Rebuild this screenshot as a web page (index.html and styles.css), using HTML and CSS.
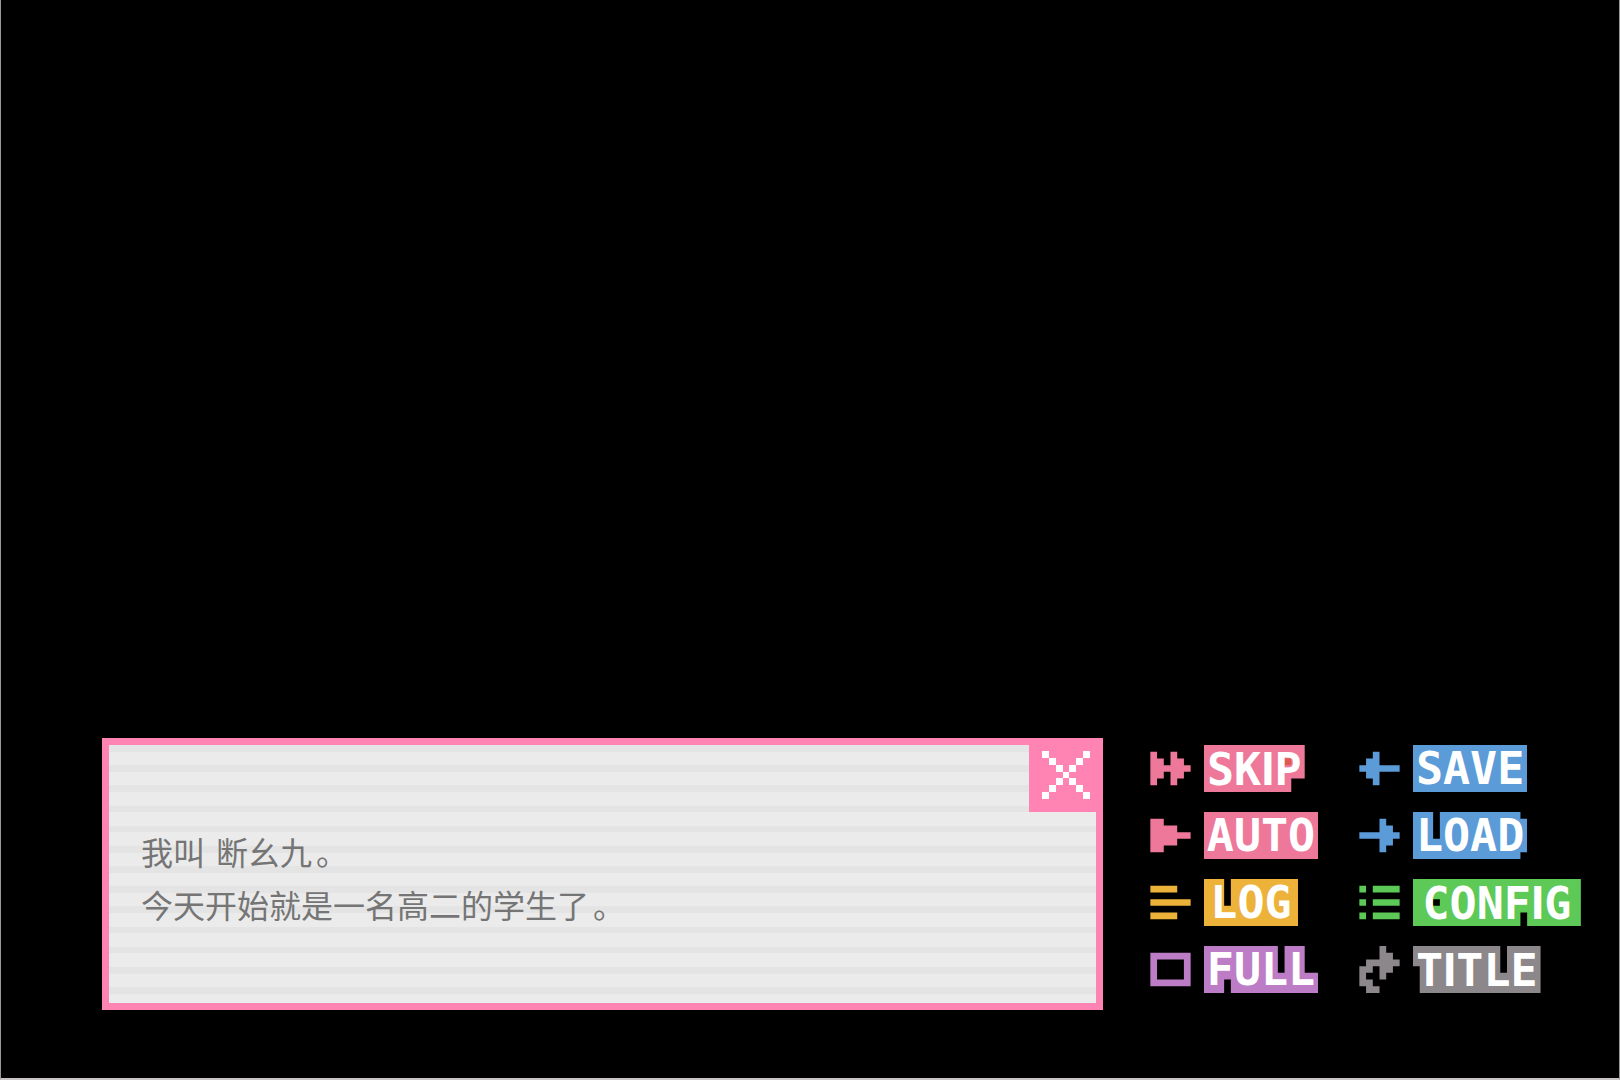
FILE: index.html
```
<!doctype html>
<html lang="zh-CN">
<head>
<meta charset="utf-8">
<title>断幺九</title>
<meta name="viewport" content="width=device-width,initial-scale=1">
<link rel="stylesheet" href="styles.css">
</head>
<body>

<main class="stage">
  <!-- dialogue box -->
  <section class="dialog">
    <p>我叫<span class="name">断幺九</span><span class="stop">。</span></p>
    <p>今天开始就是一名高二的学生了<span class="stop">。</span></p>
    <button class="close" aria-label="关闭">
      <svg viewBox="0 0 7 7" shape-rendering="crispEdges"><path d="M0 0h1v1h-1zM1 1h1v1h-1zM2 2h1v1h-1zM3 3h1v1h-1zM4 4h1v1h-1zM5 5h1v1h-1zM6 6h1v1h-1zM6 0h1v1h-1zM5 1h1v1h-1zM4 2h1v1h-1zM2 4h1v1h-1zM1 5h1v1h-1zM0 6h1v1h-1z"/></svg>
    </button>
  </section>

  <!-- system menu, one svg unit = one art pixel -->
  <nav class="menu">
    <button class="item pink">
      <svg class="icon" viewBox="0 0 6 7"><path d="M0 1h1v1h1v1h1V1h1v1h1v1h1v1h-1v1h-1v1h-1V4h-1v1h-1v1h-1z"/></svg>
      <span class="label">
        <svg class="plate" viewBox="0 0 15 7"><path d="M0 0h15v5h-2v2H0z"/><path class="spot" d="M12 2h1v1h-1z"/></svg>
        <span class="word">SK<span class="thin">I</span>P</span>
      </span>
    </button>
    <button class="item blue">
      <svg class="icon" viewBox="0 0 6 7"><path d="M0 3h1v-1h1v-1h1v2h3v1h-3v2h-1v-1h-1v-1h-1z"/></svg>
      <span class="label">
        <svg class="plate" viewBox="0 0 17 7"><path d="M0 0h17v7H0z"/></svg>
        <span class="word">SAVE</span>
      </span>
    </button>

    <button class="item pink">
      <svg class="icon" viewBox="0 0 6 7"><path d="M0 1h2v1h2v1h2v1h-2v1h-2v1h-2z"/></svg>
      <span class="label">
        <svg class="plate" viewBox="0 0 17 7"><path d="M0 0h17v7H0z"/></svg>
        <span class="word">AUTO</span>
      </span>
    </button>
    <button class="item blue">
      <svg class="icon" viewBox="0 0 6 7"><path d="M0 3h3v-2h1v1h1v1h1v1h-1v1h-1v1h-1v-2h-3z"/></svg>
      <span class="label">
        <svg class="plate" viewBox="0 0 17 7"><path d="M0 0h3v4h1V0h12v1h1v5h-1v1H0z"/></svg>
        <span class="word">LOAD</span>
      </span>
    </button>

    <button class="item yellow">
      <svg class="icon" viewBox="0 0 6 7"><path d="M0 1h4v1h-4zM0 3h6v1h-6zM0 5h4v1h-4z"/></svg>
      <span class="label">
        <svg class="plate" viewBox="0 0 14 7"><path d="M0 0h3v4h1V0h10v7H0z"/></svg>
        <span class="word">LOG</span>
      </span>
    </button>
    <button class="item green">
      <svg class="icon" viewBox="0 0 6 7"><path d="M0 1h1v1h-1zM2 1h4v1h-4zM0 3h1v1h-1zM2 3h4v1h-4zM0 5h1v1h-1zM2 5h4v1h-4z"/></svg>
      <span class="label">
        <svg class="plate" viewBox="0 0 25 7"><path fill-rule="evenodd" d="M0 0h25v7h-8v-2h-1v2H0zM3 3h1v1h-1z"/></svg>
        <span class="word">CONF<span class="thin">I</span>G</span>
      </span>
    </button>

    <button class="item purple">
      <svg class="icon" viewBox="0 0 6 7"><path fill-rule="evenodd" d="M0 1h6v5h-6zM1 2h4v3h-4z"/></svg>
      <span class="label">
        <svg class="plate" viewBox="0 0 17 7"><path d="M0 0h11v4h1V0h3v4h2v3H4v-2H3v2H0z"/></svg>
        <span class="word">FULL</span>
      </span>
    </button>
    <button class="item gray">
      <svg class="icon" viewBox="0 0 6 7"><path d="M3 0h1v1h1v1h1v1h-1v1h-1v1h-1v-2h-1v1h-1v1h1v1h1v1h-2v-1h-1v-3h1v-1h2z"/></svg>
      <span class="label">
        <svg class="plate" viewBox="0 0 19 7"><path d="M0 0h13v4h1V0h5v7H1V3H0z"/></svg>
        <span class="word">T<span class="thin">I</span>TLE</span>
      </span>
    </button>
  </nav>
</main>

</body>
</html>
```
FILE: styles.css
```
*{box-sizing:border-box;margin:0;padding:0}
html,body{height:100%}
body{
  background:#000;
  font-family:"Noto Sans CJK SC",sans-serif;
}
button{
  border:none;
  background:none;
  cursor:pointer;
}
svg{display:block}

.stage{
  min-height:100%;
  display:flex;
  align-items:flex-end;
  gap:47px;
  padding:0 37px 68px 101px;
  border:1px solid #999;
  border-top:none;
  border-bottom:2px solid #c8c4c4;
}

/* ---------- dialogue ---------- */
.dialog{
  position:relative;
  flex:1;
  padding:80px 32px 72px;
  border:7px solid #ff84b4;
  background:repeating-linear-gradient(#e4e4e4 0 2.6%,#ebebeb 2.6% 7.82%);
  color:#757575;
  font-size:32px;
  line-height:53px;
}
.name{margin-left:11px}
.stop{margin-left:4px}
.close{
  position:absolute;      /* sits in the frame's corner */
  top:-7px;
  right:-7px;
  width:74px;
  height:74px;
  padding:13px;
  background:#ff84b4;
}
.close svg{width:48px;height:48px;fill:#fff}

/* ---------- menu ---------- */
.menu{
  display:grid;
  grid-template-columns:168px 223px;
  gap:20px 41px;
  margin-bottom:17px;
}
.item{
  display:flex;
  justify-content:flex-start;
  gap:13px;
}
.icon,.plate{
  height:47px;
  fill:currentColor;
}
.icon{width:41px}
.label{display:grid}
.plate,.word{grid-area:1/1}
.word{
  height:47px;
  color:#fff;
  font:bold 45px/47px "DejaVu Sans Mono",monospace;
  text-align:center;
}
/* the mono I is as wide as the other letters, this one is a plain bar */
.thin{
  font-family:"Liberation Sans",sans-serif;
  font-size:48px;
  line-height:1;
}
.spot{fill:#dc5a50}

.pink{color:#ee7899}
.blue{color:#5b9bd8}
.yellow{color:#edb23a}
.green{color:#5dc957}
.purple{color:#bd7cc6}
.gray{color:#8c878b}
```
